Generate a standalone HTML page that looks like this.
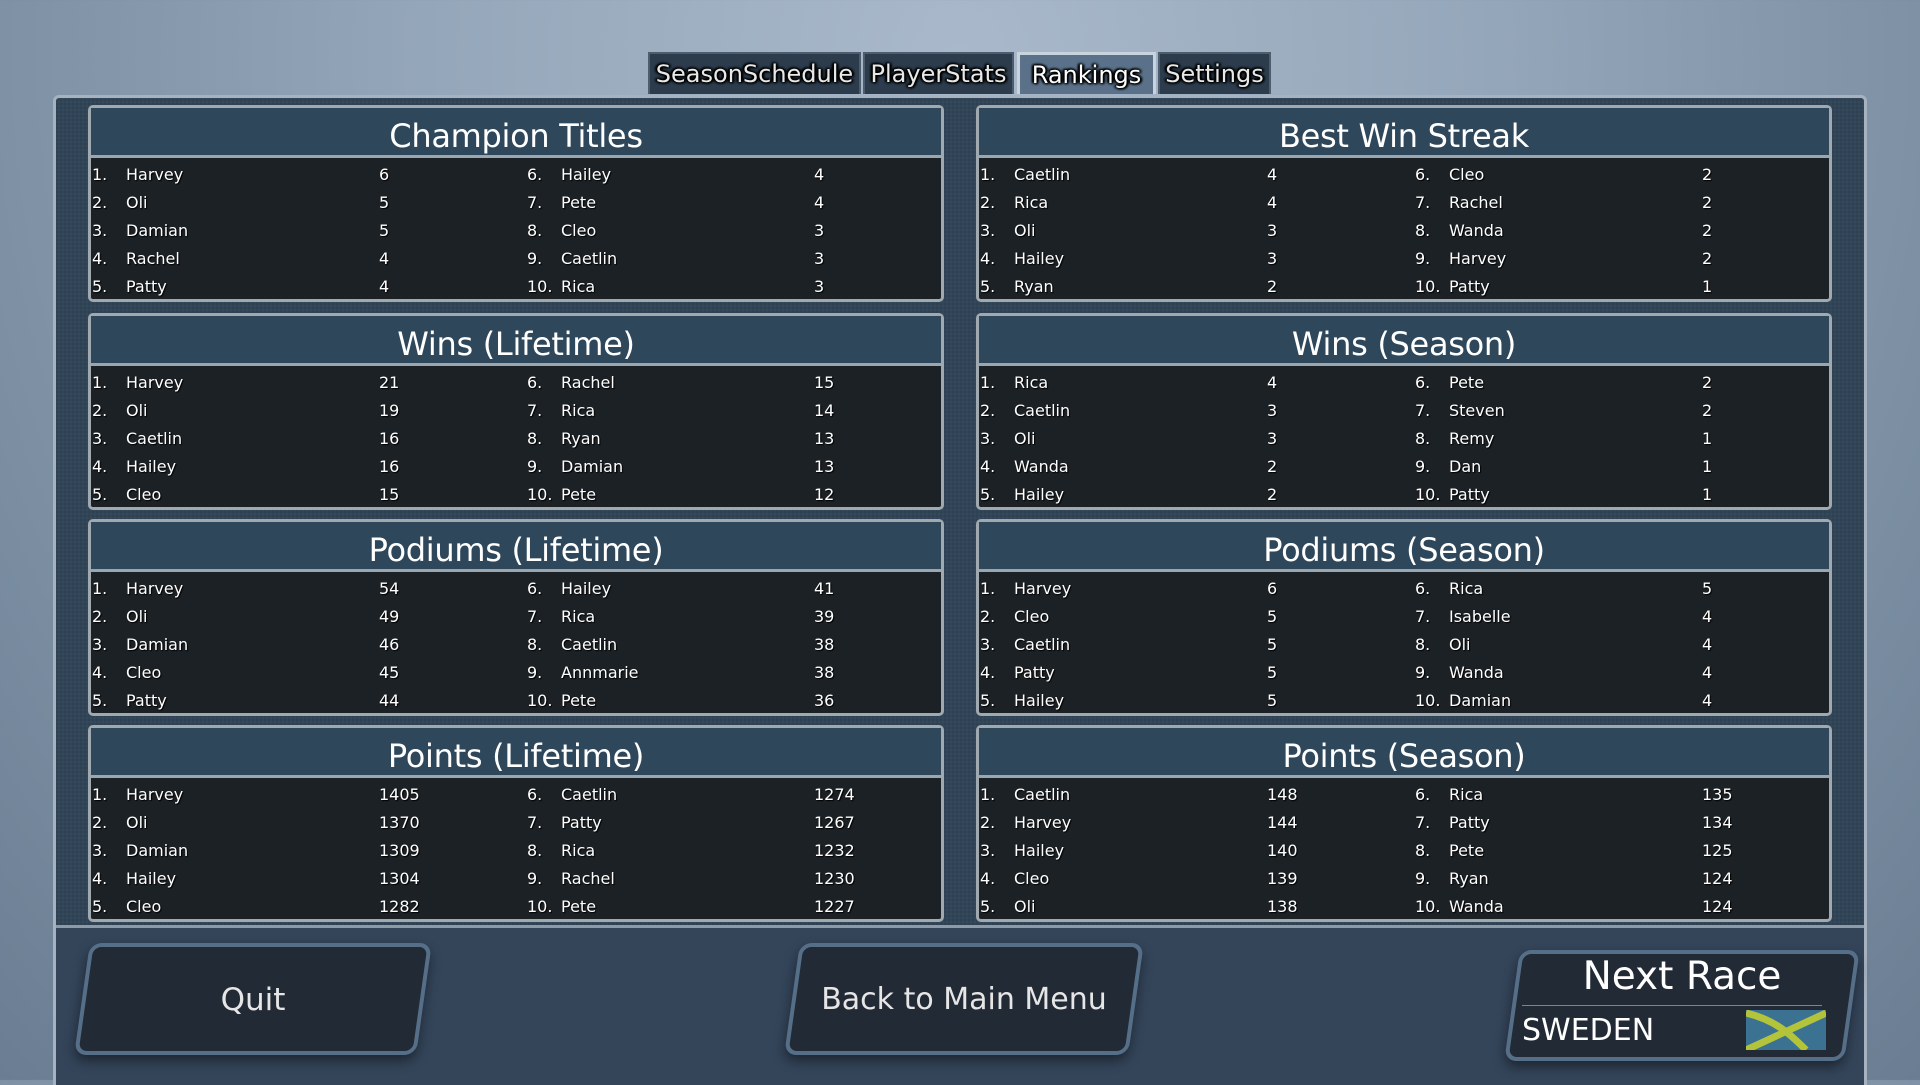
<!DOCTYPE html>
<html><head><meta charset="utf-8"><style>
*{margin:0;padding:0;box-sizing:border-box}
body{width:1920px;height:1080px;overflow:hidden;position:relative;font-family:"DejaVu Sans","Liberation Sans",sans-serif;color:#fff;
background:radial-gradient(ellipse at 50% 5%,#a9b9cb 0%,#94a6b9 40%,#7b8ea2 75%,#6a7d92 100%);}
.frame{position:absolute;left:53px;top:95px;width:1814px;height:990px;background:#34495c;border:3px solid #a6b2bf;border-bottom:none;border-radius:6px 6px 0 0;
background-image:repeating-linear-gradient(0deg,rgba(0,0,0,.06) 0 2px,transparent 2px 4px),repeating-linear-gradient(90deg,rgba(0,0,0,.05) 0 2px,transparent 2px 4px);}
.bottom{position:absolute;left:56px;top:925px;width:1808px;height:160px;background:#34455a;border-top:3px solid #8d9aa8}
.tab{position:absolute;top:52px;height:42px;background:#2c3c4c;border:2px solid #4d5d6d;border-bottom:none;font-size:24px;line-height:40px;text-align:center;color:#e8e8e8;
text-shadow:0 0 3px #000,0 0 3px #000,1px 1px 2px #000,-1px -1px 2px #000,2px 0 2px #000,-2px 0 2px #000;}
.tab.on{background:#5a7189;border:3px solid #c9d3dd;border-bottom:none;color:#fff}
.p{position:absolute;width:856px;height:197px;background:#1c2125;border:3px solid #a0a8b0;border-radius:5px;}
.p h2{height:50px;background:#2f475b;border-bottom:3px solid #9aa6b0;font-weight:normal;font-size:32px;text-align:center;line-height:56px;letter-spacing:-0.3px}
.r{position:absolute;font-size:16px;height:20px;line-height:20px;text-shadow:1px 1px 1px #000}
.btn{position:absolute;background:#222a35;border:4px solid #566f88;border-radius:12px;transform:skewX(-8deg);box-shadow:0 6px 12px rgba(0,0,0,.45);}
.bt{position:absolute;font-size:31px;color:#e6e6e6;text-align:center}
</style></head><body>
<div class="frame"></div>
<div class="bottom"></div>
<div class="tab" style="left:648px;width:213px">SeasonSchedule</div>
<div class="tab" style="left:863px;width:151px">PlayerStats</div>
<div class="tab on" style="left:1017px;width:139px">Rankings</div>
<div class="tab" style="left:1158px;width:113px">Settings</div>
<div id="panels"></div>
<script>
var d=[
["Champion Titles",88,105,[["Harvey",6],["Oli",5],["Damian",5],["Rachel",4],["Patty",4],["Hailey",4],["Pete",4],["Cleo",3],["Caetlin",3],["Rica",3]]],
["Best Win Streak",976,105,[["Caetlin",4],["Rica",4],["Oli",3],["Hailey",3],["Ryan",2],["Cleo",2],["Rachel",2],["Wanda",2],["Harvey",2],["Patty",1]]],
["Wins (Lifetime)",88,313,[["Harvey",21],["Oli",19],["Caetlin",16],["Hailey",16],["Cleo",15],["Rachel",15],["Rica",14],["Ryan",13],["Damian",13],["Pete",12]]],
["Wins (Season)",976,313,[["Rica",4],["Caetlin",3],["Oli",3],["Wanda",2],["Hailey",2],["Pete",2],["Steven",2],["Remy",1],["Dan",1],["Patty",1]]],
["Podiums (Lifetime)",88,519,[["Harvey",54],["Oli",49],["Damian",46],["Cleo",45],["Patty",44],["Hailey",41],["Rica",39],["Caetlin",38],["Annmarie",38],["Pete",36]]],
["Podiums (Season)",976,519,[["Harvey",6],["Cleo",5],["Caetlin",5],["Patty",5],["Hailey",5],["Rica",5],["Isabelle",4],["Oli",4],["Wanda",4],["Damian",4]]],
["Points (Lifetime)",88,725,[["Harvey",1405],["Oli",1370],["Damian",1309],["Hailey",1304],["Cleo",1282],["Caetlin",1274],["Patty",1267],["Rica",1232],["Rachel",1230],["Pete",1227]]],
["Points (Season)",976,725,[["Caetlin",148],["Harvey",144],["Hailey",140],["Cleo",139],["Oli",138],["Rica",135],["Patty",134],["Pete",125],["Ryan",124],["Wanda",124]]]];
var h="";
d.forEach(function(p){
h+='<div class="p" style="left:'+p[1]+'px;top:'+p[2]+'px"><h2>'+p[0]+'</h2>';
p[3].forEach(function(e,i){var c=i<5?0:1,k=i%5,y=57+k*28,o=c?435:0;
h+='<div class="r" style="left:'+(1+o)+'px;top:'+y+'px">'+(i+1)+'.</div><div class="r" style="left:'+(35+o)+'px;top:'+y+'px">'+e[0]+'</div><div class="r" style="left:'+(288+o)+'px;top:'+y+'px">'+e[1]+'</div>';});
h+='</div>';});
document.getElementById("panels").innerHTML=h;
</script>
<div class="btn" style="left:82px;top:943px;width:342px;height:112px"></div>
<div class="bt" style="left:82px;top:982px;width:342px">Quit</div>
<div class="btn" style="left:792px;top:943px;width:344px;height:112px"></div>
<div class="bt" style="left:792px;top:982px;width:344px;font-size:30px">Back to Main Menu</div>
<div class="btn" style="left:1512px;top:950px;width:340px;height:111px"></div>
<div class="bt" style="left:1520px;top:954px;width:324px;font-size:39px;color:#fff">Next Race</div>
<div style="position:absolute;left:1522px;top:1005px;width:300px;height:1px;background:#6d88a2"></div>
<div class="bt" style="left:1522px;top:1013px;font-size:30px;color:#fff;text-align:left">SWEDEN</div>
<svg style="position:absolute;left:1746px;top:1010px" width="80" height="40" viewBox="0 0 80 40"><rect width="80" height="40" fill="#3b7292"/><path d="M0 40 L80 3" stroke="#b3c43a" stroke-width="7"/><path d="M0 3 C30 10 45 25 60 40" stroke="#b3c43a" stroke-width="7" fill="none"/></svg>
</body></html>
